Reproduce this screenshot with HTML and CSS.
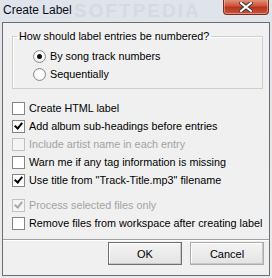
FILE: index.html
```html
<!DOCTYPE html>
<html lang="en">

<head>
    <meta charset="UTF-8">
    <title>Create Label</title>
    <link rel="stylesheet" href="styles.css">
</head>

<body>
    <div class="window">
        <div class="titlebar">
            <span class="title">Create Label</span>
            <span class="watermark">SOFTPEDIA</span>
            <button class="close" type="button" aria-label="Close">
                <svg width="14" height="10" viewBox="0 0 14 10">
                    <path d="M2 1 L12 9 M12 1 L2 9" stroke="#3a3a3a" stroke-width="4" stroke-linecap="square" />
                    <path d="M2 1 L12 9 M12 1 L2 9" stroke="#fff" stroke-width="2" stroke-linecap="square" />
                </svg>
            </button>
        </div>

        <div class="client">
            <fieldset class="group">
                <legend>How should label entries be numbered?</legend>
                <div class="radios">
                    <label class="row"><span class="radio checked"></span>By song track numbers</label>
                    <label class="row"><span class="radio"></span>Sequentially</label>
                </div>
            </fieldset>

            <div class="options">
                <label class="row"><span class="box"></span>Create HTML label</label>
                <label class="row"><span class="box checked"></span>Add album sub-headings before entries</label>
                <label class="row disabled"><span class="box"></span>Include artist name in each entry</label>
                <label class="row"><span class="box"></span>Warn me if any tag information is missing</label>
                <label class="row"><span class="box checked"></span>Use title from "Track-Title.mp3" filename</label>
            </div>

            <div class="options second">
                <label class="row disabled"><span class="box checked"></span>Process selected files only</label>
                <label class="row"><span class="box"></span>Remove files from workspace after creating label</label>
            </div>

            <div class="separator"></div>

            <div class="buttons">
                <button type="button" class="btn default">OK</button>
                <button type="button" class="btn">Cancel</button>
            </div>
        </div>
    </div>
</body>

</html>
```

FILE: styles.css
```css
body {
    margin: 0;
    background: #e9ebee;
    font-family: "Liberation Sans", Arial, sans-serif;
    font-size: 10.8px;
    color: #000;
}

.window {
    width: 272px;
    height: 278px;
    display: flex;
    flex-direction: column;
    background: linear-gradient(#dfe4ea, #e8ebef);
}

.titlebar {
    position: relative;
    height: 22px;
    display: flex;
    align-items: flex-start;
    justify-content: space-between;
    padding: 0 3px 0 3px;
}

.title {
    font-size: 12px;
    margin-top: 3px;
    color: #0b0b1c;
    position: relative;
    z-index: 1;
}

.watermark {
    position: absolute;
    left: 74px;
    top: 0;
    font-size: 19px;
    font-weight: bold;
    letter-spacing: 2px;
    color: #d6dadf;
}

.close {
    position: relative;
    width: 46px;
    height: 16px;
    margin-top: -1px;
    padding: 0;
    border: 1px solid #7a2e22;
    border-top: none;
    border-radius: 0 0 4px 4px;
    background: linear-gradient(#e39a86, #d0543a 45%, #b8351b 55%, #c9553a);
    display: flex;
    align-items: center;
    justify-content: center;
    box-shadow: inset 0 0 0 1px rgba(255, 255, 255, 0.35);
}

.client {
    flex: 1;
    margin: 0 2px 2px 2px;
    border: 1px solid #6d6d6d;
    background: #f0f0f0;
    display: flex;
    flex-direction: column;
}

.group {
    margin: 7px 6px 0 9px;
    padding: 0;
    border: 1px solid #cfcfcf;
    box-shadow: inset 1px 1px 0 #fff;
}

.group legend {
    margin-left: 4px;
    padding: 0 2px;
    line-height: 13px;
}

.radios {
    padding: 4px 0 5px 20px;
}

.row {
    height: 18px;
    display: flex;
    align-items: center;
    gap: 4px;
    white-space: nowrap;
}

.radio {
    width: 11px;
    height: 11px;
    border: 1px solid #8a8a8a;
    border-radius: 50%;
    background: radial-gradient(#ffffff 40%, #e2e2e2);
    display: flex;
    align-items: center;
    justify-content: center;
}

.radio.checked::after {
    content: "";
    width: 5px;
    height: 5px;
    border-radius: 50%;
    background: #111;
}

.options {
    margin: 10px 0 0 9px;
}

.options.second {
    margin-top: 7px;
}

.box {
    width: 11px;
    height: 11px;
    border: 1px solid #858585;
    background: #fff;
    display: flex;
    align-items: center;
    justify-content: center;
    flex-shrink: 0;
}

.box.checked::after {
    content: "";
    width: 3px;
    height: 6px;
    border: solid #000;
    border-width: 0 2px 2px 0;
    transform: translate(0, -1px) rotate(40deg);
}

.disabled {
    color: #a3a3a3;
}

.disabled .box {
    border-color: #c2c2c2;
    background: #f4f4f4;
}

.disabled .box.checked::after {
    border-color: #a8a8a8;
}

.separator {
    margin-top: 7px;
    height: 0;
    border-top: 1px solid #a0a0a0;
    border-bottom: 1px solid #fff;
}

.buttons {
    display: flex;
    justify-content: flex-end;
    gap: 8px;
    padding: 1px 5px 0 0;
}

.btn {
    width: 74px;
    height: 23px;
    font-family: "Liberation Sans", Arial, sans-serif;
    font-size: 11px;
    color: #000;
    background: linear-gradient(#f4f4f4, #e3e3e3);
    border: 1px solid #acacac;
    box-shadow: inset -1px -1px 0 #c8c8c8, inset 1px 1px 0 #fff;
    padding: 0;
}

.btn.default {
    border-color: #707070;
}
```
